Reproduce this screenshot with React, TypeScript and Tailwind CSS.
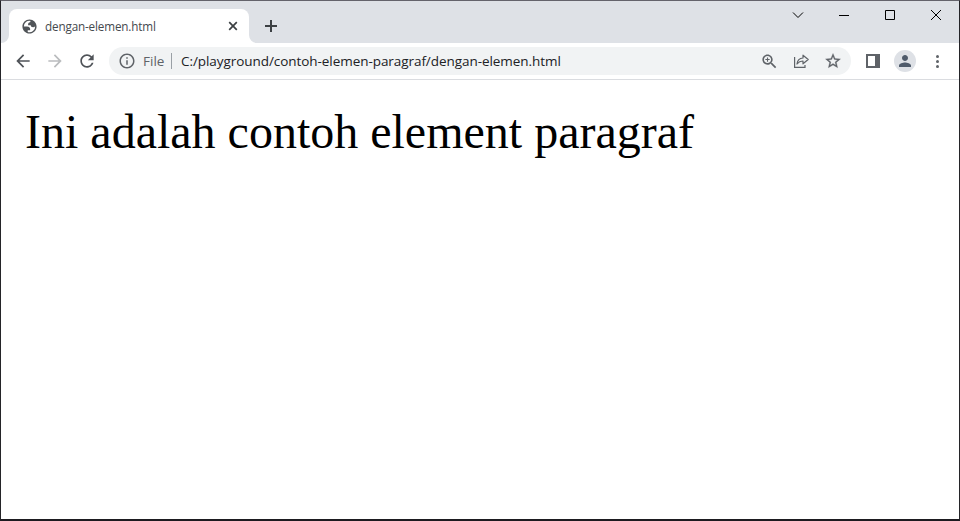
import type { ReactNode } from "react";

type IconProps = { size: number; className?: string; children: ReactNode };

function Icon({ size, className = "", children }: IconProps) {
  return (
    <svg width={size} height={size} viewBox="0 0 24 24" fill="currentColor" className={`shrink-0 ${className}`}>
      {children}
    </svg>
  );
}

function TabStrip() {
  return (
    <div className="flex h-[42px] items-end bg-[#dee1e6]">
      <svg width="8" height="8" viewBox="0 0 8 8" className="shrink-0 text-white">
        <path d="M8 0A8 8 0 0 1 0 8H8Z" fill="currentColor" />
      </svg>
      <div className="flex h-[34px] w-[240px] shrink-0 items-center rounded-t-[8px] bg-white pl-[12px] pr-[10px]">
        <Icon size={17} className="text-[#505458]">
          <path
            fillRule="evenodd"
            d="M12 2C6.480 2 2 6.480 2 12s4.480 10 10 10 10-4.480 10-10S17.520 2 12 2zM4 12h4.400c3.407.022 4.922 1.730 4.543 5.127H9.488v2.470a8.004 8.004 0 0 0 10.498-8.083C19.327 12.504 18.332 13 17 13c-2.137 0-3.206-.916-3.206-2.750h-3.748c-.274-2.728.683-4.092 2.870-4.092 0-.975.327-1.597.811-1.970A8 8 0 0 0 4 12z"
          />
        </Icon>
        <span className="ml-[7px] flex-1 whitespace-nowrap text-[11.700px] leading-[16px] tracking-[-0.150px] text-[#45494d]">
          dengan-elemen.html
        </span>
        <svg width="12" height="12" viewBox="0 0 12 12" className="text-[#3c4043]">
          <path d="M2.200 2.200L9.800 9.800M9.800 2.200L2.200 9.800" stroke="currentColor" strokeWidth="1.700" />
        </svg>
      </div>
      <svg width="8" height="8" viewBox="0 0 8 8" className="shrink-0 text-white">
        <path d="M0 0A8 8 0 0 0 8 8H0Z" fill="currentColor" />
      </svg>
      <svg width="14" height="14" viewBox="0 0 14 14" className="mb-[10px] ml-[7px] shrink-0 text-[#3c4043]">
        <path d="M7 1V13M1 7H13" stroke="currentColor" strokeWidth="2" />
      </svg>
      <div className="ml-auto flex h-full items-start text-black">
        <svg width="46" height="28" viewBox="0 0 46 28" fill="none" stroke="currentColor">
          <path d="M18 11.500L23 16.500L28 11.500" />
        </svg>
        <svg width="46" height="28" viewBox="0 0 46 28" fill="none" stroke="currentColor">
          <path d="M18 14.500H28" />
        </svg>
        <svg width="46" height="28" viewBox="0 0 46 28" fill="none" stroke="currentColor">
          <path d="M18.500 9.500H27.500V18.500H18.500Z" />
        </svg>
        <svg width="46" height="28" viewBox="0 0 46 28" fill="none" stroke="currentColor">
          <path d="M18 9L28 19M28 9L18 19" />
        </svg>
      </div>
    </div>
  );
}

function AddressBar() {
  return (
    <div className="flex h-[28px] flex-1 items-center rounded-full bg-[#f1f3f4] pl-[9px] pr-[9px] text-[#5f6368]">
      <Icon size={18}>
        <path d="M11 17h2v-6h-2v6zm1-15C6.480 2 2 6.480 2 12s4.480 10 10 10 10-4.480 10-10S17.520 2 12 2zm0 18c-4.410 0-8-3.590-8-8s3.590-8 8-8 8 3.590 8 8-3.590 8-8 8zM11 9h2V7h-2v2z" />
      </Icon>
      <span className="ml-[7px] w-[28px] whitespace-nowrap text-[13.500px] leading-[20px]">File</span>
      <span className="h-[16px] w-px bg-[#9aa0a6]" />
      <span className="ml-[9px] flex-1 whitespace-nowrap text-[13.500px] leading-[20px] tracking-[-0.060px] text-[#202124]">
        C:/playground/contoh-elemen-paragraf/dengan-elemen.html
      </span>
      <Icon size={19} className="-mr-px">
        <path d="M15.500 14h-.790l-.280-.270C15.410 12.590 16 11.110 16 9.500 16 5.910 13.090 3 9.500 3S3 5.910 3 9.500 5.910 16 9.500 16c1.610 0 3.090-.590 4.230-1.570l.270.280v.790l5 4.990L20.490 19l-4.990-5zm-6 0C7.010 14 5 11.990 5 9.500S7.010 5 9.500 5 14 7.010 14 9.500 11.990 14 9.500 14zm.700-7.200H8.800v2h-2v1.400h2v2h1.400v-2h2V8.800h-2z" />
      </Icon>
      <svg width="18" height="18" viewBox="0 0 18 18" fill="none" stroke="currentColor" strokeWidth="1.200" className="ml-[14px] shrink-0">
        <path d="M2.600 5V15.400H13V13" />
        <path d="M5 12C5.400 8.500 7.500 6.200 11 6V3.200L16.200 7.500L11 11.800V9C8.500 8.900 6.600 10 5 12Z" strokeLinejoin="round" />
      </svg>
      <Icon size={18} className="ml-[14px]">
        <path
          d="M22 9.240l-7.190-.620L12 2 9.190 8.630 2 9.240l5.460 4.730L5.820 21 12 17.270 18.180 21l-1.630-7.030L22 9.240zM12 15.400l-3.760 2.270 1-4.280-3.320-2.880 4.380-.380L12 6.100l1.710 4.040 4.380.380-3.320 2.880 1 4.280L12 15.400z"
          stroke="currentColor"
          strokeWidth="0.400"
        />
      </Icon>
    </div>
  );
}

function Toolbar() {
  return (
    <div className="flex h-[37px] items-center border-b border-[#dadce0] bg-white pl-[12px] pr-[12px] text-[#5f6368]">
      <Icon size={20} className="text-[#4f5358]">
        <path d="M20 11H7.830l5.590-5.590L12 4l-8 8 8 8 1.410-1.410L7.830 13H20v-2z" />
      </Icon>
      <Icon size={20} className="ml-[12px] text-[#babcbe]">
        <path d="M12 4l-1.410 1.410L16.170 11H4v2h12.170l-5.580 5.590L12 20l8-8z" />
      </Icon>
      <Icon size={20} className="ml-[12px] mr-[12px] text-[#4f5358]">
        <path d="M17.650 6.350C16.200 4.900 14.210 4 12 4c-4.420 0-7.990 3.580-7.990 8s3.570 8 7.990 8c3.730 0 6.840-2.550 7.730-6h-2.080c-.820 2.330-3.040 4-5.650 4-3.310 0-6-2.690-6-6s2.690-6 6-6c1.660 0 3.140.690 4.220 1.780L13 11h7V4l-2.350 2.350z" />
      </Icon>
      <AddressBar />
      <svg width="14" height="14" viewBox="0 0 14 14" className="ml-[15px] shrink-0">
        <path d="M0 0H14V14H0ZM2 2V12H9V2Z" fill="currentColor" fillRule="evenodd" />
      </svg>
      <div className="ml-[14px] flex size-[22px] shrink-0 items-center justify-center rounded-full bg-[#dee1e6]">
        <Icon size={18} className="text-[#4f5b6b]">
          <path d="M12 12c2.210 0 4-1.790 4-4s-1.790-4-4-4-4 1.790-4 4 1.790 4 4 4zm0 2c-2.670 0-8 1.340-8 4v2h16v-2c0-2.660-5.330-4-8-4z" />
        </Icon>
      </div>
      <svg width="20" height="20" viewBox="0 0 20 20" fill="currentColor" className="ml-[11px] shrink-0">
        <circle cx="10.500" cy="5.500" r="1.500" />
        <circle cx="10.500" cy="10.500" r="1.500" />
        <circle cx="10.500" cy="15.500" r="1.500" />
      </svg>
    </div>
  );
}

export default function App() {
  return (
    <div className="flex h-screen w-full flex-col overflow-hidden border-x border-b-2 border-t border-x-[#242428] border-b-[#1d1b20] border-t-[#64636b] bg-white font-['Open_Sans','Noto_Sans',sans-serif]">
      <TabStrip />
      <Toolbar />
      <main className="flex-1 px-[24px] pt-[24px]">
        <p className="whitespace-nowrap font-['Liberation_Serif','Times_New_Roman',serif] text-[48px] leading-[55px] text-black">
          Ini adalah contoh element paragraf
        </p>
      </main>
    </div>
  );
}
